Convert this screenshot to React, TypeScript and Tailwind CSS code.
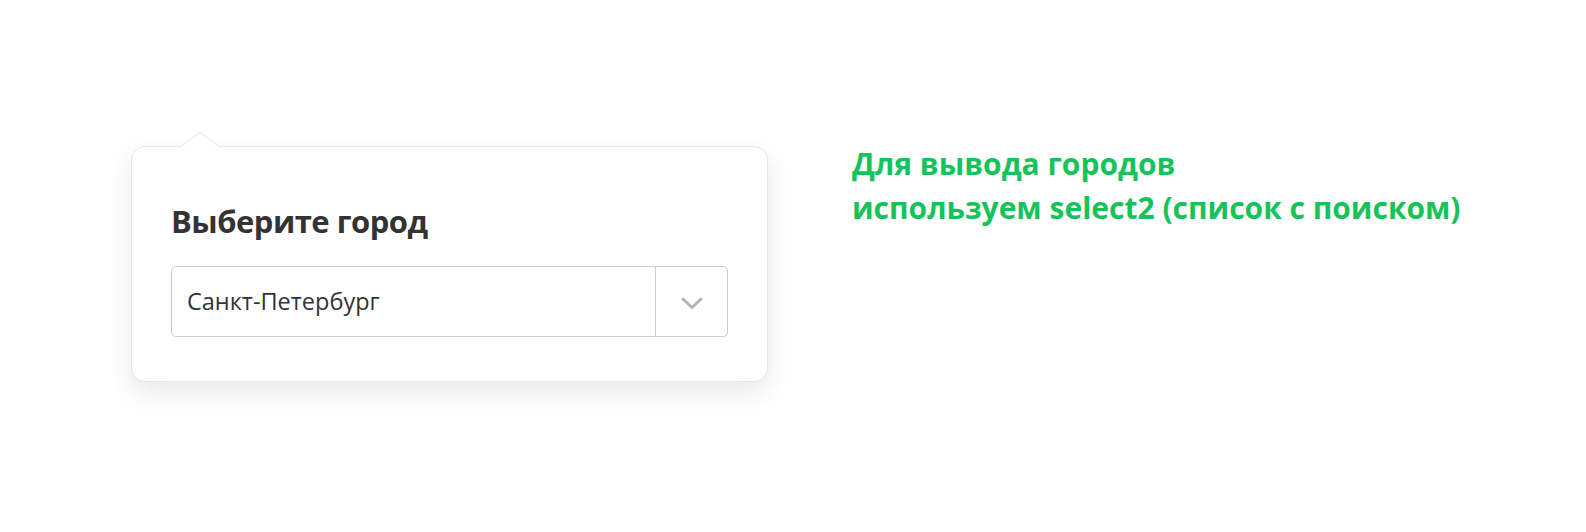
const FONT = { fontFamily: '"Open Sans", "Noto Sans", sans-serif' };

function Chevron() {
  return (
    <svg className="mt-[3px]" width="22" height="13" viewBox="0 0 22 13" fill="none">
      <polyline points="2,2 11,10.5 20,2" stroke="#b3b3b3" strokeWidth="3" strokeLinecap="round" strokeLinejoin="round" />
    </svg>
  );
}

function CityPopover() {
  return (
    <div className="relative w-[637px] h-[236px] shrink-0 rounded-[14px] border border-[#e6e6e6] bg-white px-[39px] pt-[55px] shadow-[0_10px_24px_rgba(0,0,0,0.09)]">
      <svg className="absolute left-[48px] top-[-16px]" width="40" height="17" viewBox="0 0 40 17">
        <polyline points="0,16.5 20,1 40,16.5" fill="#fff" stroke="#e6e6e6" strokeWidth="1" />
      </svg>
      <h2 className="text-[31px] leading-[38px] font-bold text-[#333] tracking-[-0.5px]">Выберите город</h2>
      <div className="mt-[26px] flex h-[71px] w-full items-stretch rounded-[5px] border-[1.5px] border-[#cccccc]">
        <div className="flex flex-1 items-center pl-[15px] text-[23.5px] text-[#333]">Санкт-Петербург</div>
        <div className="flex w-[72px] items-center justify-center border-l-[1.5px] border-[#cccccc]">
          <Chevron />
        </div>
      </div>
    </div>
  );
}

export default function App() {
  return (
    <div className="flex h-[532px] w-full items-start bg-white pl-[131px] pt-[146px]" style={FONT}>
      <CityPopover />
      <p className="ml-[84px] mt-[-4px] text-[30px] leading-[44px] font-bold text-[#16c35b]">
        Для вывода городов
        <br />
        используем select2 (список с поиском)
      </p>
    </div>
  );
}
